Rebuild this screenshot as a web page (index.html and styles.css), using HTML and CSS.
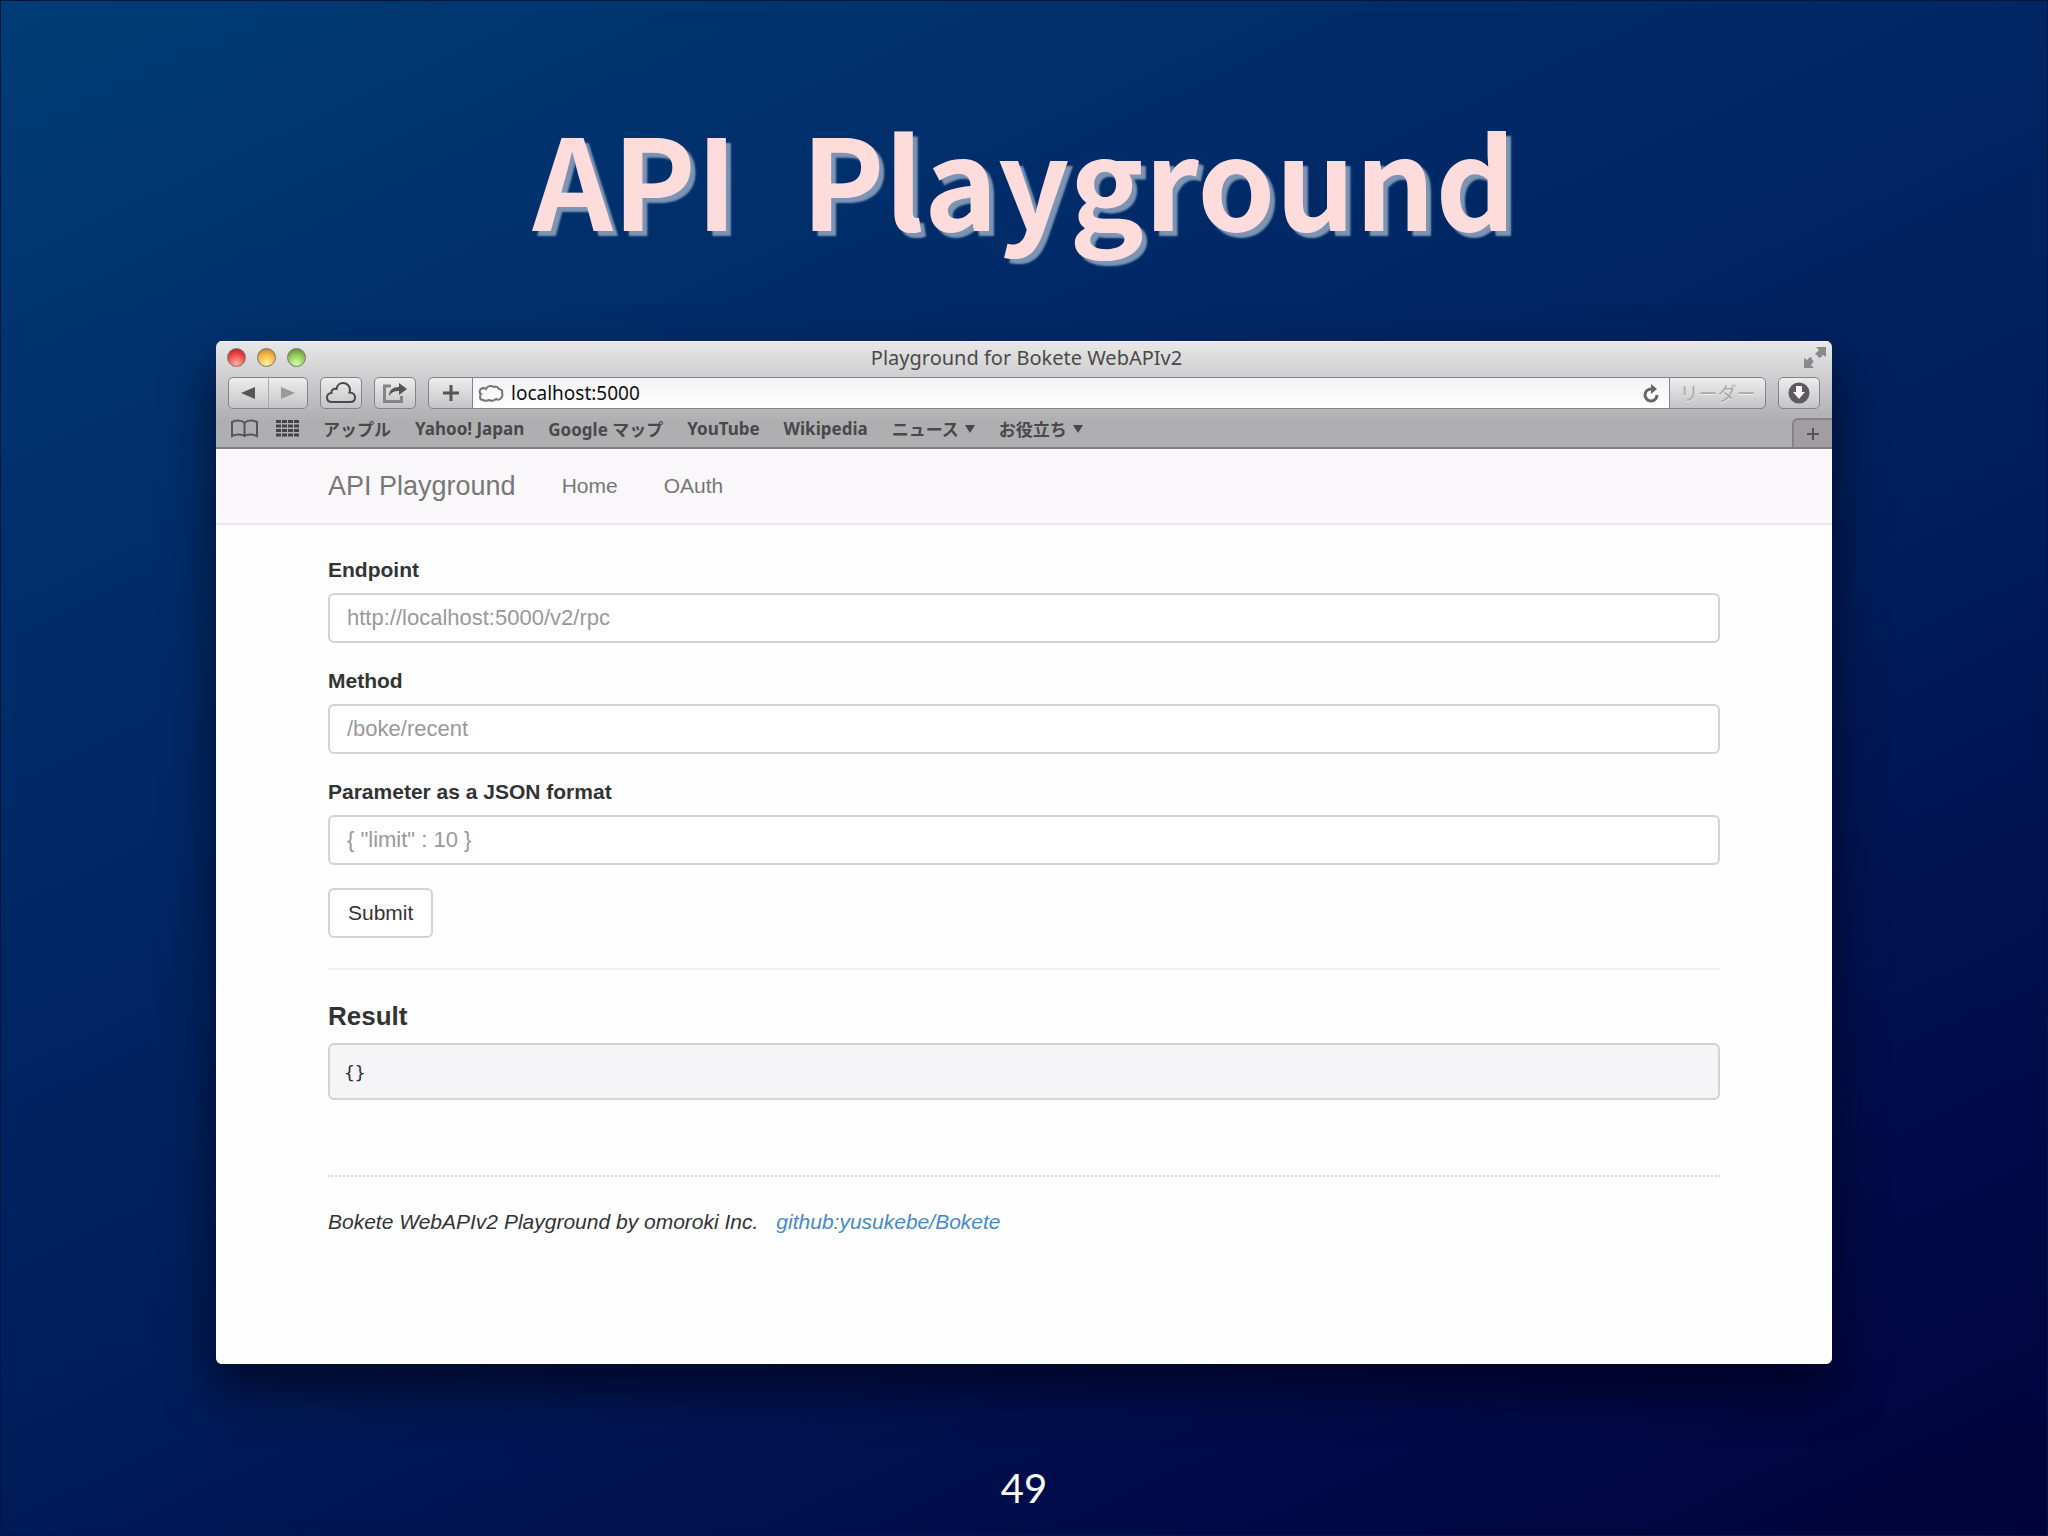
FILE: index.html
```html
<!DOCTYPE html>
<html lang="ja">

<head>
    <meta charset="UTF-8">
    <meta name="viewport" content="width=device-width, initial-scale=1.0">
    <title>API Playground</title>
    <link rel="stylesheet" href="styles.css">
</head>

<body>
    <div class="slide">
        <h1 class="slide_title"><span>API</span> <span>Playground</span></h1>

        <div class="window">
            <div class="titlebar">
                <div class="lights">
                    <button class="light red" aria-label="Close"></button>
                    <button class="light yellow" aria-label="Minimize"></button>
                    <button class="light green" aria-label="Zoom"></button>
                </div>
                <span class="window_title">Playground for Bokete WebAPIv2</span>
                <button class="fullscreen" aria-label="Full screen">
                    <svg width="22" height="22" viewBox="0 0 22 22" fill="#8b898b">
                        <path d="M12 0h10v10l-3-2-3 3-2-1-1-2-2-1 4-4z" />
                        <path d="M10 21H0V11l3 2 3-3 2 1 0 2 2 1-3 4z" />
                    </svg>
                </button>
            </div>

            <div class="toolbar">
                <div class="nav_btns">
                    <button class="arrow" aria-label="Back">
                        <svg width="14" height="14" viewBox="0 0 14 14"><path d="M14 1v12L0 7z" fill="#555" /></svg>
                    </button>
                    <button class="arrow" aria-label="Forward">
                        <svg width="14" height="14" viewBox="0 0 14 14"><path d="M0 1v12l14-6z" fill="#999" /></svg>
                    </button>
                </div>
                <button class="tool" aria-label="iCloud tabs">
                    <svg width="30" height="22" viewBox="0 0 30 22" fill="none" stroke="#4a4a4a" stroke-width="2">
                        <path d="M6 20C2.500 20 1 18 1 15.500S3 11 5.500 11C5 8 7.500 6 10.500 7 11 3 14 1 17 1c4 0 7 3 7 7 0 1 0 1.500-.5 2.500C26.500 10.500 29 12.500 29 15.500S27 20 24 20z" />
                    </svg>
                </button>
                <button class="tool" aria-label="Share">
                    <svg width="26" height="22" viewBox="0 0 26 22">
                        <path d="M9 4H2.500v15.500h17V14" fill="none" stroke="#858385" stroke-width="3" />
                        <path d="M7 14c0-6 4-9 10-9V1l8 6-8 6V9c-5 0-7 1-10 5z" fill="#555" />
                    </svg>
                </button>
                <div class="address">
                    <button class="add" aria-label="Add bookmark">
                        <svg width="16" height="16" viewBox="0 0 16 16"><path d="M8 0v16M0 8h16" stroke="#555" stroke-width="3" /></svg>
                    </button>
                    <div class="url_box">
                        <svg width="26" height="18" viewBox="0 0 26 18" fill="none" stroke="#777" stroke-width="2">
                            <path d="M5 16c-2 0-3-1-3-3 0-1 0-2 1-3-2-1-2-5 2-6 1 0 2 0 3 1 1-3 5-4 8-2 2-1 4 0 5 2 2 0 4 2 3 4 1 2 0 4-1 5-1 2-3 2-5 1-2 2-5 2-7 1-2 1-4 1-6 0z" />
                        </svg>
                        <input class="url" type="text" value="localhost:5000" aria-label="Address">
                        <button class="reload" aria-label="Reload">
                            <svg width="16" height="19" viewBox="0 0 16 19">
                                <path d="M9 5a6 6 0 1 0 5 6" fill="none" stroke="#666" stroke-width="3" />
                                <path d="M8 0l6 5-6 5z" fill="#666" />
                            </svg>
                        </button>
                    </div>
                    <button class="reader">リーダー</button>
                </div>
                <button class="tool" aria-label="Downloads">
                    <svg width="22" height="22" viewBox="0 0 22 22">
                        <circle cx="11" cy="11" r="10.500" fill="#5c5a5c" />
                        <path d="M8 4h6v6h3l-6 7-6-7h3z" fill="#f4f4f4" />
                    </svg>
                </button>
            </div>

            <div class="bookmarks">
                <div class="bookmark_icons">
                    <button aria-label="Bookmarks">
                        <svg width="27" height="19" viewBox="0 0 27 19" fill="none" stroke="#555" stroke-width="2">
                            <path d="M13.500 4C11 1 5 1 1 3v14c4-2 10-2 12.500 0C16 15 22 15 26 17V3C22 1 16 1 13.500 4zv13" />
                        </svg>
                    </button>
                    <button aria-label="Top sites">
                        <svg width="23" height="17" viewBox="0 0 23 17" stroke="#444" stroke-width="3" stroke-dasharray="5 1">
                            <path d="M0 1.500h23M0 6h23M0 10.500h23M0 15h23" />
                        </svg>
                    </button>
                </div>
                <a href="#">アップル</a>
                <a href="#">Yahoo! Japan</a>
                <a href="#">Google マップ</a>
                <a href="#">YouTube</a>
                <a href="#">Wikipedia</a>
                <a href="#" class="folder">ニュース</a>
                <a href="#" class="folder">お役立ち</a>
                <button class="new_tab" aria-label="New tab">
                    <svg width="12" height="12" viewBox="0 0 12 12"><path d="M6 0v12M0 6h12" stroke="#555" stroke-width="2" /></svg>
                </button>
            </div>

            <div class="page">
                <nav class="navbar">
                    <a href="#" class="brand">API Playground</a>
                    <a href="#">Home</a>
                    <a href="#">OAuth</a>
                </nav>
                <main class="container">
                    <form>
                        <label for="endpoint">Endpoint</label>
                        <input id="endpoint" class="field" type="text" placeholder="http://localhost:5000/v2/rpc">
                        <label for="method">Method</label>
                        <input id="method" class="field" type="text" placeholder="/boke/recent">
                        <label for="params">Parameter as a JSON format</label>
                        <input id="params" class="field" type="text" placeholder='{ "limit" : 10 }'>
                        <button type="button" class="submit">Submit</button>
                    </form>
                    <hr>
                    <h4>Result</h4>
                    <pre class="result">{}</pre>
                    <footer>
                        <span>Bokete WebAPIv2 Playground by omoroki Inc.</span>
                        <a href="#">github:yusukebe/Bokete</a>
                    </footer>
                </main>
            </div>
        </div>

        <div class="slide_number">49</div>
    </div>
</body>

</html>
```

FILE: styles.css
```css
* {
    box-sizing: border-box;
    margin: 0;
    padding: 0;
}

button {
    border: none;
    background: none;
    font-family: inherit;
}

svg {
    display: block;
}

a {
    text-decoration: none;
}

.slide {
    display: flex;
    flex-direction: column;
    min-height: 100vh;
    padding: 0 215px;
    border: 1px solid #00173f;
    background: linear-gradient(155deg, #003c75 0%, #002b68 30%, #001d5a 58%, #000a48 84%, #00033a 100%);
    font-family: "Noto Sans", "Noto Sans CJK JP", sans-serif;
}

.slide_title {
    display: flex;
    justify-content: center;
    gap: 64px;
    height: 340px;
    padding-top: 76px;
    font-family: "Noto Sans CJK JP", sans-serif;
    font-size: 125px;
    line-height: 200px;
    color: #ffdcdc;
    text-shadow: 5px 5px 2px #7d95b5;
}

.window {
    display: flex;
    flex-direction: column;
    border-radius: 6px;
    overflow: hidden;
    background: linear-gradient(#e9e8e9, #afaeb0 80px);
    box-shadow: 0 24px 50px rgba(0, 0, 20, 0.7);
}

/* title bar */
.titlebar {
    display: grid;
    grid-template-columns: 1fr auto 1fr;
    align-items: center;
    height: 35px;
    padding: 0 6px 3px 11px;
    border-top: 1px solid #f6f6f6;
}

.lights {
    display: flex;
    gap: 11px;
}

.light {
    width: 19px;
    height: 19px;
    border-radius: 50%;
    border: 1px solid #777;
}

.red {
    background: radial-gradient(circle at 50% 85%, #ffb0a0, #e8403c 60%, #a02020);
}

.yellow {
    background: radial-gradient(circle at 50% 85%, #fff0a0, #f0b040 60%, #a87020);
}

.green {
    background: radial-gradient(circle at 50% 85%, #d8ffa8, #88c050 60%, #507828);
}

.window_title {
    font-size: 20px;
    line-height: 28px;
    color: #4a4a4a;
}

.fullscreen {
    justify-self: end;
}

/* toolbar */
.toolbar {
    display: flex;
    gap: 12px;
    padding: 1px 12px 0;
    height: 33px;
}

.nav_btns,
.tool,
.address {
    border: 1px solid #858385;
    border-radius: 5px;
    background: linear-gradient(#eeedee, #c4c3c5);
}

.nav_btns {
    display: flex;
    width: 80px;
}

.arrow,
.tool,
.add,
.reload {
    display: flex;
    align-items: center;
    justify-content: center;
}

.arrow {
    flex: 1;
}

.arrow + .arrow {
    border-left: 1px solid #aaa;
}

.tool {
    width: 42px;
}

.address {
    display: flex;
    flex: 1;
    overflow: hidden;
}

.add {
    width: 44px;
    border-right: 1px solid #858385;
}

.url_box {
    display: flex;
    flex: 1;
    align-items: center;
    gap: 7px;
    padding: 0 10px 0 5px;
    background: linear-gradient(#f3f2f5, #fff);
}

.url {
    flex: 1;
    border: none;
    background: none;
    font-family: inherit;
    font-size: 19px;
    color: #111;
}

.reader {
    width: 96px;
    border-left: 1px solid #858385;
    font-size: 19px;
    color: #aaa8aa;
    text-shadow: 0 1px 0 #f0f0f0;
}

/* bookmarks bar */
.bookmarks {
    display: flex;
    align-items: center;
    gap: 24px;
    height: 40px;
    padding-left: 15px;
    border-bottom: 2px solid #807e80;
    font-size: 17px;
    font-weight: bold;
}

.bookmark_icons {
    display: flex;
    align-items: center;
    gap: 18px;
}

.bookmarks a {
    color: #4a484a;
}

.folder::after {
    content: "";
    display: inline-block;
    margin-left: 6px;
    border: 5px solid transparent;
    border-top: 8px solid #4a484a;
    border-bottom: none;
    vertical-align: 3px;
}

.new_tab {
    display: flex;
    align-items: center;
    justify-content: center;
    align-self: flex-end;
    width: 40px;
    height: 29px;
    margin-left: auto;
    border: 1px solid #858385;
    border-width: 2px 0 0 2px;
    border-top-left-radius: 6px;
    background: #a09ea0;
}

/* page */
.page {
    background: #fefefe;
    font-family: "Liberation Sans", Arial, sans-serif;
    font-size: 21px;
    color: #333;
}

.navbar {
    display: flex;
    align-items: center;
    gap: 46px;
    height: 76px;
    padding: 0 112px;
    border-bottom: 2px solid #e9e7e9;
    background: #f9f7f9;
}

.navbar a {
    color: #777;
}

.navbar .brand {
    font-size: 27px;
}

.container {
    padding: 30px 112px 127px;
}

label {
    display: block;
    margin-bottom: 8px;
    line-height: 30px;
    font-weight: bold;
}

.field {
    display: block;
    width: 100%;
    height: 50px;
    margin-bottom: 23px;
    padding: 0 17px;
    border: 2px solid #d4d2d6;
    border-radius: 6px;
    background: #fff;
    font-family: inherit;
    font-size: 22px;
}

.field::placeholder {
    color: #999;
}

.submit {
    height: 50px;
    padding: 0 18px;
    border: 2px solid #d4d2d6;
    border-radius: 6px;
    background: #fff;
    font-size: 21px;
    color: #333;
}

hr {
    margin: 30px 0;
    border: none;
    border-top: 2px solid #f0eff1;
}

h4 {
    margin-bottom: 11px;
    font-size: 26px;
    line-height: 32px;
}

.result {
    height: 57px;
    padding: 0 14px;
    border: 2px solid #d4d2d6;
    border-radius: 6px;
    background: #f5f4f7;
    font-family: "DejaVu Sans Mono", monospace;
    font-size: 18px;
    line-height: 56px;
}

footer {
    display: flex;
    gap: 18px;
    margin-top: 75px;
    padding-top: 30px;
    border-top: 2px dotted #d8d6d8;
    line-height: 30px;
    font-style: italic;
}

footer a {
    color: #428bca;
}

.slide_number {
    margin-top: 100px;
    font-family: Lato, sans-serif;
    font-size: 40px;
    line-height: 48px;
    text-align: center;
    color: #fff;
}
```
